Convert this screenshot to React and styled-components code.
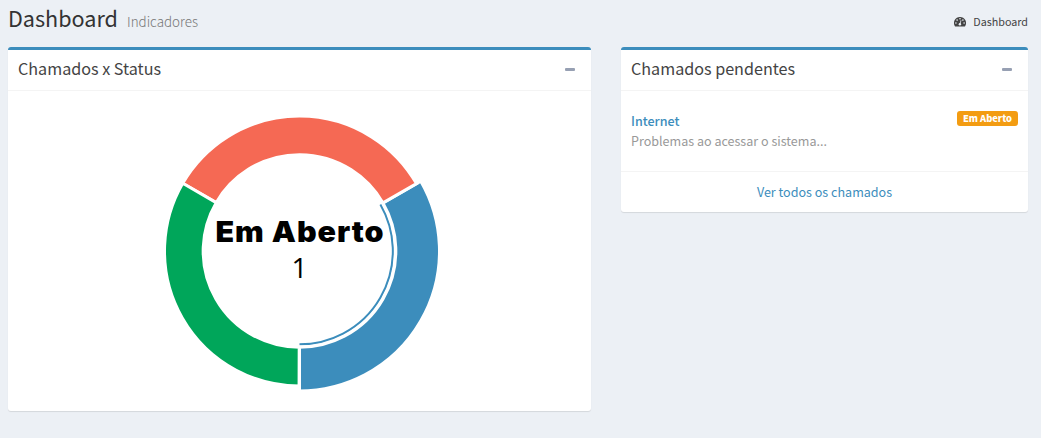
import React from "react";
import styled, { createGlobalStyle } from "styled-components";

const GlobalStyle = createGlobalStyle`
  * { box-sizing: border-box; }
  body {
    margin: 0;
    min-height: 100vh;
    background: #ecf0f5;
    color: #333;
    font-family: "Noto Sans CJK SC", "Noto Sans", sans-serif;
    font-size: 12.55px;
    line-height: 20px;
  }
`;

const Page = styled.main`
  width: 1041px;
  height: 438px;
  padding: 0 13px 0 8px;
  overflow: hidden;
`;

const ContentHeader = styled.header`
  display: flex;
  justify-content: space-between;
  height: 47px;
`;

const Heading = styled.h1`
  display: flex;
  align-items: baseline;
  gap: 9px;
  margin: 0;
  padding-top: 6px;
  font-size: 21.6px;
  font-weight: 400;
  line-height: 24px;
`;

const Subtitle = styled.small`
  color: #777;
  font-size: 13.4px;
  font-weight: 300;
`;

const Breadcrumb = styled.nav`
  display: flex;
  align-items: center;
  gap: 7px;
  height: 20px;
  margin-top: 12px;
  color: #444;
  font-size: 10.75px;
`;

const Columns = styled.div`
  display: grid;
  grid-template-columns: 583px 407px;
  column-gap: 30px;
  align-items: start;
`;

const Box = styled.section`
  background: #fff;
  border-top: 3px solid #3c8dbc;
  border-radius: 3px;
  box-shadow: 0 1px 1px rgba(0, 0, 0, 0.1);
`;

const BoxHeader = styled.div`
  display: flex;
  align-items: flex-start;
  justify-content: space-between;
  height: 41px;
  padding: 9px 16px 0 10px;
  border-bottom: 1px solid #f4f4f4;
`;

const BoxTitle = styled.h3`
  margin: 0;
  color: #444;
  font-size: 16.15px;
  font-weight: 400;
  line-height: 18px;
`;

const Collapse = styled.button`
  width: 10px;
  height: 3px;
  margin-top: 9px;
  padding: 0;
  border: 0;
  border-radius: 1px;
  background: #97a0b3;
`;

const ChartBody = styled.div`
  height: 320px;
  padding: 10px;
`;

const Chart = styled.svg`
  display: block;
  width: 563px;
  height: 300px;
`;

const ListBody = styled.div`
  height: 80px;
  padding: 20px 10px 0;
`;

const ItemHead = styled.div`
  display: flex;
  align-items: flex-start;
  justify-content: space-between;
  height: 20px;
`;

const ItemTitle = styled.a`
  color: #3c8dbc;
  font-weight: 500;
`;

const Label = styled.span`
  height: 15px;
  padding: 0 6px;
  border-radius: 3px;
  background: #f39c12;
  color: #fff;
  font-size: 9.3px;
  font-weight: 900;
  line-height: 14px;
`;

const Description = styled.p`
  margin: 0;
  color: #999;
`;

const BoxFooter = styled.div`
  height: 41px;
  padding-top: 10px;
  border-top: 1px solid #f4f4f4;
  color: #3c8dbc;
  text-align: center;
`;

const SLICES = [
  { color: "#3c8dbc", selected: true },
  { color: "#f56954" },
  { color: "#00a65a" },
];

const CX = 281.5;
const CY = 150;
const RING = 280 / 3;

const point = (r, a) => `${CX + r * Math.sin(a)} ${CY + r * Math.cos(a)}`;

function slicePath(i, outer) {
  const step = (1.999 * Math.PI) / 3;
  const a = i * step;
  const b = a + step;
  const inner = RING + 3;
  return `M${point(inner, a)} A${inner} ${inner} 0 0 0 ${point(inner, b)} L${point(outer, b)} A${outer} ${outer} 0 0 1 ${point(outer, a)} Z`;
}

function Donut() {
  const end = (1.999 * Math.PI) / 3;
  return (
    <Chart viewBox="0 0 563 300">
      <path
        d={`M${point(RING, 0)} A${RING} ${RING} 0 0 0 ${point(RING, end)}`}
        fill="none"
        stroke="#3c8dbc"
        strokeWidth="2"
      />
      {SLICES.map((s, i) => (
        <path
          key={s.color}
          d={slicePath(i, s.selected ? 140 : 135)}
          fill={s.color}
          stroke="#fff"
          strokeWidth="3"
        />
      ))}
      <text
        x="197.5"
        y="141"
        textLength="169"
        lengthAdjust="spacingAndGlyphs"
        letterSpacing="0.9"
        fontFamily="Inter, sans-serif"
        fontWeight="900"
        fontSize="28.5"
      >
        Em Aberto
      </text>
      <text x="281.5" y="177" textAnchor="middle" fontFamily="Open Sans, sans-serif" fontSize="28">
        1
      </text>
    </Chart>
  );
}

const DashboardIcon = () => (
  <svg width="12" height="10" viewBox="0 0 12 10" aria-hidden="true">
    <path d="M6 0a6 6 0 0 0-5.1 9.2c.2.3.4.4.7.4h8.8c.3 0 .5-.1.7-.4A6 6 0 0 0 6 0z" fill="#444" />
    <g fill="#ecf0f5">
      <circle cx="1.9" cy="6" r=".8" />
      <circle cx="3.1" cy="3.1" r=".8" />
      <circle cx="6" cy="1.8" r=".8" />
      <circle cx="8.9" cy="3.1" r=".8" />
      <circle cx="10.1" cy="6" r=".8" />
      <circle cx="5.9" cy="7.3" r="1.2" />
    </g>
    <path d="M6 7.2 6.9 3.6" stroke="#ecf0f5" strokeWidth=".8" strokeLinecap="round" />
  </svg>
);

export default function App() {
  return (
    <Page>
      <GlobalStyle />
      <ContentHeader>
        <Heading>
          Dashboard <Subtitle>Indicadores</Subtitle>
        </Heading>
        <Breadcrumb>
          <DashboardIcon />
          <span>Dashboard</span>
        </Breadcrumb>
      </ContentHeader>
      <Columns>
        <Box>
          <BoxHeader>
            <BoxTitle>Chamados x Status</BoxTitle>
            <Collapse aria-label="Minimizar" />
          </BoxHeader>
          <ChartBody>
            <Donut />
          </ChartBody>
        </Box>
        <Box>
          <BoxHeader>
            <BoxTitle>Chamados pendentes</BoxTitle>
            <Collapse aria-label="Minimizar" />
          </BoxHeader>
          <ListBody>
            <ItemHead>
              <ItemTitle>Internet</ItemTitle>
              <Label>Em Aberto</Label>
            </ItemHead>
            <Description>Problemas ao acessar o sistema...</Description>
          </ListBody>
          <BoxFooter>Ver todos os chamados</BoxFooter>
        </Box>
      </Columns>
    </Page>
  );
}
